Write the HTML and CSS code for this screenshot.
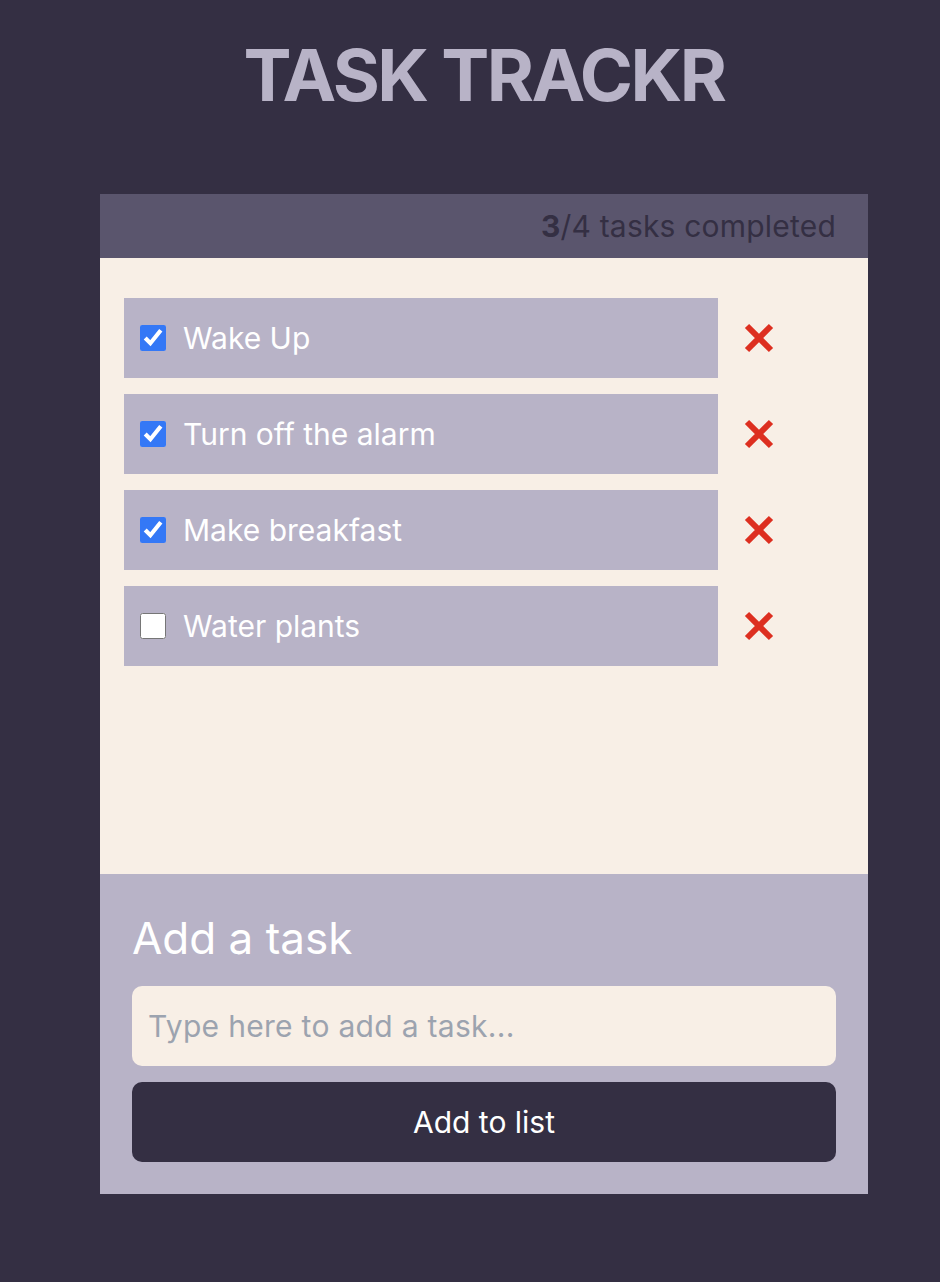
FILE: index.html
```html
<!DOCTYPE html>
<html lang="en">
<head>
<meta charset="utf-8">
<title>Task Trackr</title>
<link rel="stylesheet" href="styles.css">
</head>
<body>
<main class="page">
  <h1 class="title">TASK TRACKR</h1>
  <section class="card">
    <header class="card-header">
      <p class="count"><strong>3</strong>/4 tasks completed</p>
    </header>
    <ul class="task-list">
      <li class="task-row">
        <label class="task"><input type="checkbox" class="check" checked><span>Wake Up</span></label>
        <button class="delete" aria-label="Delete task"><svg viewBox="0 0 34 34" class="x-icon"><path d="M5 5 L29 29 M29 5 L5 29"/></svg></button>
      </li>
      <li class="task-row">
        <label class="task"><input type="checkbox" class="check" checked><span>Turn off the alarm</span></label>
        <button class="delete" aria-label="Delete task"><svg viewBox="0 0 34 34" class="x-icon"><path d="M5 5 L29 29 M29 5 L5 29"/></svg></button>
      </li>
      <li class="task-row">
        <label class="task"><input type="checkbox" class="check" checked><span>Make breakfast</span></label>
        <button class="delete" aria-label="Delete task"><svg viewBox="0 0 34 34" class="x-icon"><path d="M5 5 L29 29 M29 5 L5 29"/></svg></button>
      </li>
      <li class="task-row">
        <label class="task"><input type="checkbox" class="check"><span>Water plants</span></label>
        <button class="delete" aria-label="Delete task"><svg viewBox="0 0 34 34" class="x-icon"><path d="M5 5 L29 29 M29 5 L5 29"/></svg></button>
      </li>
    </ul>
    <form class="add-form">
      <h2 class="add-title">Add a task</h2>
      <input type="text" class="add-input" placeholder="Type here to add a task...">
      <button type="button" class="add-button">Add to list</button>
    </form>
  </section>
</main>
</body>
</html>
```

FILE: styles.css
```css
* { box-sizing: border-box; }

html, body {
  margin: 0;
  padding: 0;
  background: #342f43;
  font-family: Inter, "Noto Sans", "Liberation Sans", sans-serif;
}

.page {
  width: 940px;
  min-height: 1282px;
  padding-top: 31px;
  padding-left: 28px;
  display: flex;
  flex-direction: column;
  align-items: center;
}

.title {
  margin: 0 0 75px;
  font-size: 72px;
  line-height: 88px;
  font-weight: 700;
  color: #b8b3c7;
  letter-spacing: -2.5px;
}

.card {
  width: 768px;
  display: flex;
  flex-direction: column;
}

.card-header {
  height: 64px;
  background: #5a556d;
  display: flex;
  align-items: center;
  justify-content: flex-end;
  padding: 0 32px;
}

.count {
  margin: 0;
  font-size: 30px;
  color: #342f43;
  letter-spacing: 0.2px;
}

.count strong { font-weight: 700; }

.task-list {
  list-style: none;
  margin: 0;
  height: 616px;
  padding: 40px 68px 40px 24px;
  background: #f8efe6;
  display: flex;
  flex-direction: column;
  gap: 16px;
}

.task-row {
  display: flex;
  align-items: center;
}

.task {
  flex: 1;
  height: 80px;
  background: #b8b3c7;
  display: flex;
  align-items: center;
  gap: 17px;
  padding-left: 16px;
  font-size: 30px;
  color: #ffffff;
}

.check {
  width: 26px;
  height: 26px;
  margin: 0;
  accent-color: #3478f6;
}

.delete {
  border: 0;
  background: none;
  padding: 0 24px;
  margin: 0;
  display: flex;
  cursor: pointer;
}

.x-icon {
  width: 34px;
  height: 34px;
  stroke: #dd2f20;
  stroke-width: 6;
  stroke-linecap: butt;
  fill: none;
}

.add-form {
  background: #b8b3c7;
  padding: 32px;
  display: flex;
  flex-direction: column;
}

.add-title {
  margin: 0 0 16px;
  font-size: 44px;
  line-height: 64px;
  font-weight: 400;
  color: #ffffff;
}

.add-input {
  height: 80px;
  border: 0;
  border-radius: 10px;
  background: #f8efe6;
  padding: 0 16px;
  font-family: inherit;
  font-size: 30px;
  letter-spacing: 0.3px;
  color: #342f43;
  margin-bottom: 16px;
  outline: none;
}

.add-input::placeholder { color: #9ca3af; }

.add-button {
  height: 80px;
  border: 0;
  border-radius: 10px;
  background: #342f43;
  color: #ffffff;
  font-family: inherit;
  font-size: 30px;
  cursor: pointer;
}
```
